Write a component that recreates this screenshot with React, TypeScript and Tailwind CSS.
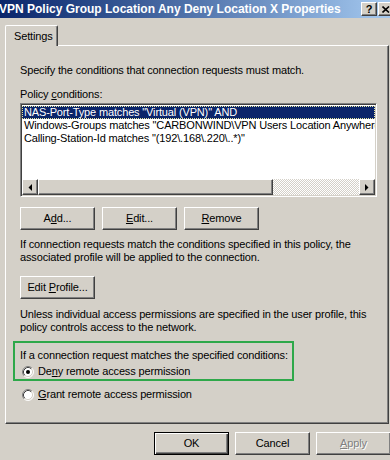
import React from "react";

const raised =
  "bg-[#d4d0c8] border border-t-white border-l-white border-r-[#404040] border-b-[#404040] shadow-[inset_-1px_-1px_#808080]";

function Btn({ children, isDefault, disabled }: { children: React.ReactNode; isDefault?: boolean; disabled?: boolean }) {
  const frame = isDefault
    ? "bg-[#d4d0c8] border border-black shadow-[inset_1px_1px_white,inset_-1px_-1px_#404040,inset_-2px_-2px_#808080]"
    : raised;
  return (
    <div
      className={`flex h-[23px] w-[75px] shrink-0 items-center justify-center ${frame} ${
        disabled ? "text-[#808080] [text-shadow:1px_1px_white]" : ""
      }`}
    >
      <span className="whitespace-pre">{children}</span>
    </div>
  );
}

function Radio({ checked }: { checked?: boolean }) {
  return (
    <svg width="12" height="12" viewBox="0 0 12 12" className="shrink-0">
      <circle cx="6" cy="6" r="5" fill="white" />
      <path d="M2.11 9.89 A5.5 5.5 0 0 1 9.89 2.11" fill="none" stroke="#808080" strokeWidth="1" />
      <path d="M9.89 2.11 A5.5 5.5 0 0 1 2.11 9.89" fill="none" stroke="#ffffff" strokeWidth="1" />
      <path d="M2.82 9.18 A4.5 4.5 0 0 1 9.18 2.82" fill="none" stroke="#404040" strokeWidth="1" />
      <path d="M9.18 2.82 A4.5 4.5 0 0 1 2.82 9.18" fill="none" stroke="#d4d0c8" strokeWidth="1" />
      {checked && <circle cx="6" cy="6" r="2" fill="black" />}
    </svg>
  );
}

function Arrow({ dir }: { dir: "left" | "right" }) {
  return (
    <div className={`flex h-[16px] w-[16px] shrink-0 items-center justify-center ${raised}`}>
      <svg width="4" height="7" viewBox="0 0 4 7">
        <polygon points={dir === "left" ? "4,0 4,7 0.5,3.5" : "0,0 0,7 3.5,3.5"} fill="black" />
      </svg>
    </div>
  );
}

export default function App() {
  return (
    <div className="h-[460px] w-[390px] overflow-hidden bg-[#d4d0c8] font-['Liberation_Sans',Arial,sans-serif] text-[11px] leading-[13px] tracking-[-0.15px] text-black">
      {/* title bar */}
      <div className="flex h-[18px] bg-gradient-to-r from-[#0a246a] to-[#a6caf0]">
        <span className="-ml-px min-w-0 flex-1 self-center overflow-hidden whitespace-nowrap text-[12px] font-bold tracking-normal text-white">
          VPN Policy Group Location Any Deny Location X Properties
        </span>
        <div className="-mr-[4px] mt-[2px] flex gap-[1px]">
          <div className={`flex h-[14px] w-[16px] items-center justify-center text-[11px] font-bold ${raised}`}>?</div>
          <div className={`flex h-[14px] w-[16px] items-center justify-center ${raised}`}>
            <svg width="8" height="7" viewBox="0 0 8 7">
              <path d="M0.5 0.5 L7 6.5 M7 0.5 L0.5 6.5" stroke="black" strokeWidth="1.6" />
            </svg>
          </div>
        </div>
      </div>

      <div className="px-[5px] pt-[7px]">
        {/* tab */}
        <div className="relative z-10 -mb-px flex h-[21px] w-[53px] items-center rounded-t-[2px] border-l border-t border-r border-white border-r-[#404040] bg-[#d4d0c8] pl-[8px] shadow-[inset_-1px_0_#808080]">
          Settings
        </div>

        {/* tab page */}
        <div className="h-[379px] w-[384px] border border-t-white border-l-white border-r-[#404040] border-b-[#404040] pl-[14px] pt-[18px] shadow-[inset_-1px_-1px_#808080]">
          <p>Specify the conditions that connection requests must match.</p>
          <p className="mt-[11px]">
            Policy <u>c</u>onditions:
          </p>

          <div className="mt-[2px] flex h-[94px] w-[357px] flex-col border border-t-[#808080] border-l-[#808080] border-b-white border-r-white bg-white p-[1px] shadow-[inset_1px_1px_#404040,inset_-1px_-1px_#d4d0c8]">
            <div className="flex-1 overflow-hidden whitespace-nowrap pt-[1px]">
              <div className="h-[13px] bg-[#0a246a] pl-[2px] text-white outline outline-1 -outline-offset-1 outline-dotted outline-[#e8e8a0]">
                NAS-Port-Type matches "Virtual (VPN)" AND
              </div>
              <div className="h-[13px] pl-[2px]">Windows-Groups matches "CARBONWIND\VPN Users Location Anywhere"</div>
              <div className="h-[13px] pl-[2px]">Calling-Station-Id matches "(192\.168\.220\..*)"</div>
            </div>
            <div className="flex h-[16px]">
              <Arrow dir="left" />
              <div className={`h-[16px] w-[235px] ${raised}`} />
              <div className="flex-1 bg-[image:repeating-conic-gradient(#d4d0c8_0_25%,#ffffff_0_50%)] bg-[length:2px_2px]" />
              <Arrow dir="right" />
            </div>
          </div>

          <div className="mt-[10px] flex gap-[7px]">
            <Btn>
              A<u>d</u>d...
            </Btn>
            <Btn>
              <u>E</u>dit...
            </Btn>
            <Btn>
              <u>R</u>emove
            </Btn>
          </div>

          <p className="mt-[8px] whitespace-nowrap">
            If connection requests match the conditions specified in this policy, the
            <br />
            associated profile will be applied to the connection.
          </p>

          <div className="mt-[12px]">
            <Btn>
              Edit <u>P</u>rofile...
            </Btn>
          </div>

          <p className="mt-[9px] whitespace-nowrap">
            Unless individual access permissions are specified in the user profile, this
            <br />
            policy controls access to the network.
          </p>

          <div className="-ml-[7px] mt-[7px] w-[281px] border-2 border-[#2ea84a] pb-[1px] pl-[5px] pt-[6px]">
            <p className="whitespace-nowrap">If a connection request matches the specified conditions:</p>
            <div className="mt-[3px] flex h-[13px] items-center gap-[4px] pl-[2px]">
              <Radio checked />
              <span>
                De<u>n</u>y remote access permission
              </span>
            </div>
          </div>

          <div className="mt-[7px] flex h-[13px] items-center gap-[4px] pl-[2px]">
            <Radio />
            <span>
              <u>G</u>rant remote access permission
            </span>
          </div>
        </div>

        {/* dialog buttons */}
        <div className="mt-[8px] flex gap-[6px] pl-[149px]">
          <Btn isDefault>OK</Btn>
          <Btn>Cancel</Btn>
          <Btn disabled>
            <u>A</u>pply
          </Btn>
        </div>
      </div>
    </div>
  );
}
